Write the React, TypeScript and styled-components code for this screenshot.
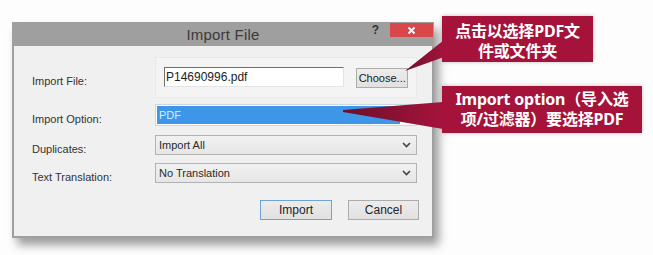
import * as React from 'react';
import styled, { createGlobalStyle } from 'styled-components';

const GlobalStyle = createGlobalStyle`
    html, body {
        margin: 0;
        padding: 0;
        background: #ffffff;
    }
`;

const Page = styled.div`
    position: relative;
    width: 653px;
    height: 255px;
    box-sizing: border-box;
    padding: 16px 0 0 12px;
    display: flex;
    align-items: flex-start;
    overflow: hidden;
    font-family: "Liberation Sans", Arial, sans-serif;
    background: #fdfdfd;
`;

const Dialog = styled.div`
    margin-top: 6px;
    width: 422px;
    height: 216px;
    box-sizing: border-box;
    display: flex;
    flex-direction: column;
    background: #9f9f9f;
    padding: 0 2px 2px;
    box-shadow: 5px 7px 9px rgba(0, 0, 0, 0.38);
`;

const TitleBar = styled.div`
    height: 24px;
    margin: 0 -2px;
    display: grid;
    grid-template-columns: 1fr auto 1fr;
    align-items: center;
`;

const Title = styled.div`
    grid-column: 2;
    font-size: 15px;
    letter-spacing: 0.2px;
    color: #3a3a3a;
    padding-top: 1px;
`;

const TitleControls = styled.div`
    grid-column: 3;
    justify-self: end;
    align-self: start;
    display: flex;
    align-items: flex-start;
    gap: 11px;
    margin-right: 1px;
`;

const Help = styled.span`
    font-size: 12px;
    font-weight: 700;
    color: #333;
    line-height: 14px;
    margin-top: 1px;
`;

const CloseButton = styled.div`
    width: 43px;
    height: 14px;
    margin-top: 1px;
    background: #d8474a;
    display: flex;
    align-items: center;
    justify-content: center;
`;

const Body = styled.div`
    flex: 1;
    background: #f0f0f0;
    padding: 11px 15px 0 18px;
    display: flex;
    flex-direction: column;
`;

const Row = styled.div<{ $top?: number }>`
    display: grid;
    grid-template-columns: 123px 262px;
    align-items: center;
    margin-top: ${p => p.$top ?? 0}px;
`;

const Label = styled.div`
    font-size: 11px;
    color: #333;
    padding-top: 7px;
`;

const FilePanel = styled.div`
    height: 41px;
    box-sizing: border-box;
    display: flex;
    align-items: center;
    gap: 12px;
    padding: 0 8px;
    background: #f4f4f4;
    border: 1px solid #e9e9e9;
`;

const TextBox = styled.div`
    width: 182px;
    height: 20px;
    box-sizing: border-box;
    background: #fff;
    border-top: 1px solid #6f6f6f;
    border-left: 1px solid #6f6f6f;
    border-right: 1px solid #e4e4e4;
    border-bottom: 1px solid #e4e4e4;
    font-size: 12px;
    color: #222;
    line-height: 18px;
    padding-left: 1px;
    margin-top: -1px;
`;

const Button = styled.div<{ $width: number; $default?: boolean; $small?: boolean }>`
    width: ${p => p.$width}px;
    height: 20px;
    box-sizing: border-box;
    background: linear-gradient(#ececec, #e1e1e1);
    border: 1px solid ${p => p.$default ? '#6fa3d6' : '#acacac'};
    font-size: ${p => p.$small ? 11 : 12}px;
    color: #222;
    display: flex;
    align-items: center;
    justify-content: center;
`;

const Select = styled.div<{ $height: number; $active?: boolean }>`
    height: ${p => p.$height}px;
    box-sizing: border-box;
    display: flex;
    align-items: center;
    padding: ${p => p.$active ? '1px' : '0 5px 0 3px'};
    background: ${p => p.$active ? '#ffffff' : 'linear-gradient(#f1f1f1, #e6e6e6)'};
    border: 1px solid ${p => p.$active ? '#c9d8e6' : '#b2b2b2'};
    font-size: 11px;
    color: #2a2a2a;
`;

const Highlight = styled.div`
    width: 241px;
    height: 100%;
    background: #3d96e7;
    color: #d9ecfd;
    padding-left: 2px;
    display: flex;
    align-items: center;
`;

const SelectValue = styled.span`
    flex: 1;
`;

const Buttons = styled.div`
    margin-top: 17px;
    margin-right: -2px;
    display: flex;
    justify-content: flex-end;
    gap: 16px;
`;

const CalloutStack = styled.div`
    margin-left: 8px;
    display: flex;
    flex-direction: column;
    align-items: flex-start;
    gap: 24px;
`;

const Callout = styled.div<{ $width: number; $height: number; $padTop: number }>`
    width: ${p => p.$width}px;
    height: ${p => p.$height}px;
    box-sizing: border-box;
    padding-top: ${p => p.$padTop}px;
    background: #a5133b;
    color: #fff;
    font-family: "Noto Sans", "Noto Sans CJK SC", sans-serif;
    font-weight: 700;
    font-size: 16px;
    line-height: 20px;
    letter-spacing: -0.2px;
    text-align: center;
    box-shadow: 0 0 4px rgba(0, 0, 0, 0.25);
`;

const Pointers = styled.svg`
    position: absolute;
    left: 0;
    top: 0;
    pointer-events: none;
`;

const Chevron = () => (
    <svg width="9" height="6" viewBox="0 0 9 6">
        <path d="M1 1 L4.5 4.5 L8 1" fill="none" stroke="#444" strokeWidth="1.6" />
    </svg>
);

const CloseX = () => (
    <svg width="9" height="9" viewBox="0 0 9 9">
        <path d="M1.5 1.5 L7.5 7.5 M7.5 1.5 L1.5 7.5" stroke="#fff" strokeWidth="1.8" />
    </svg>
);

export default function App() {
    return (
        <>
            <GlobalStyle />
            <Page>
                <Dialog>
                    <TitleBar>
                        <Title>Import File</Title>
                        <TitleControls>
                            <Help>?</Help>
                            <CloseButton><CloseX /></CloseButton>
                        </TitleControls>
                    </TitleBar>
                    <Body>
                        <Row>
                            <Label>Import File:</Label>
                            <FilePanel>
                                <TextBox>P14690996.pdf</TextBox>
                                <Button $width={52} $small>Choose...</Button>
                            </FilePanel>
                        </Row>
                        <Row $top={6}>
                            <Label>Import Option:</Label>
                            <Select $height={22} $active>
                                <Highlight>PDF</Highlight>
                            </Select>
                        </Row>
                        <Row $top={9}>
                            <Label>Duplicates:</Label>
                            <Select $height={20}>
                                <SelectValue>Import All</SelectValue>
                                <Chevron />
                            </Select>
                        </Row>
                        <Row $top={8}>
                            <Label>Text Translation:</Label>
                            <Select $height={20}>
                                <SelectValue>No Translation</SelectValue>
                                <Chevron />
                            </Select>
                        </Row>
                        <Buttons>
                            <Button $width={72} $default>Import</Button>
                            <Button $width={71}>Cancel</Button>
                        </Buttons>
                    </Body>
                </Dialog>
                <CalloutStack>
                    <Callout $width={151} $height={46} $padTop={5}>
                        点击以选择PDF文<br />件或文件夹
                    </Callout>
                    <Callout $width={200} $height={47} $padTop={3}>
                        Import option（导入选<br />项/过滤器）要选择PDF
                    </Callout>
                </CalloutStack>
                <Pointers width="653" height="255" viewBox="0 0 653 255">
                    <defs>
                        <linearGradient id="wedge" x1="0" x2="1" y1="0" y2="0">
                            <stop offset="0" stopColor="#6e0f2b" />
                            <stop offset="1" stopColor="#a5133b" />
                        </linearGradient>
                    </defs>
                    <polygon points="444,40 444,57 405,71" fill="url(#wedge)" />
                    <polygon points="343,110 343,112 443,129 443,102" fill="url(#wedge)" />
                </Pointers>
            </Page>
        </>
    );
}
